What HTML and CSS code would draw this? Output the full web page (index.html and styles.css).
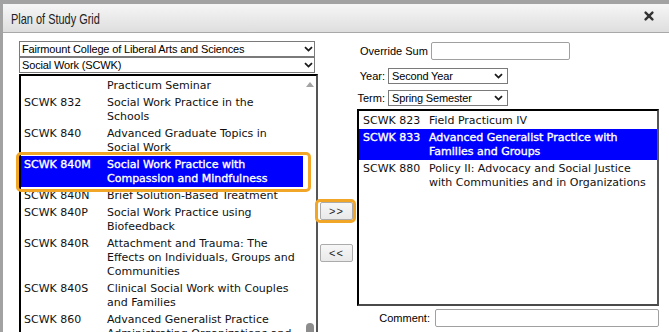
FILE: index.html
```html
<!DOCTYPE html>
<html>
<head>
<meta charset="utf-8">
<link rel="stylesheet" href="styles.css">
</head>
<body>
<div class="dialog">
  <div class="titlebar">
    <span class="title">Plan of Study Grid</span>
    <svg class="close" width="10" height="10" viewBox="0 0 10 10"><path d="M1.6 1.6 L8.4 8.4 M8.4 1.6 L1.6 8.4" stroke="#333" stroke-width="2.4" stroke-linecap="round"/></svg>
  </div>
  <div class="content">
    <div class="left">
      <div class="select wide"><span>Fairmount College of Liberal Arts and Sciences</span><svg class="chev" width="9" height="6" viewBox="0 0 9 6"><path d="M1 1.2 L4.5 4.6 L8 1.2" fill="none" stroke="#1a1a1a" stroke-width="1.8"/></svg></div>
      <div class="select wide"><span>Social Work (SCWK)</span><svg class="chev" width="9" height="6" viewBox="0 0 9 6"><path d="M1 1.2 L4.5 4.6 L8 1.2" fill="none" stroke="#1a1a1a" stroke-width="1.8"/></svg></div>
      <div class="listbox left-list">
        <div class="items">
          <div class="item"><span class="code"></span><span class="name">Practicum Seminar</span></div>
          <div class="item"><span class="code">SCWK 832</span><span class="name">Social Work Practice in the Schools</span></div>
          <div class="item"><span class="code">SCWK 840</span><span class="name">Advanced Graduate Topics in Social Work</span></div>
          <div class="item selected focused"><span class="code">SCWK 840M</span><span class="name">Social Work Practice with Compassion and Mindfulness</span></div>
          <div class="item"><span class="code">SCWK 840N</span><span class="name">Brief Solution-Based Treatment</span></div>
          <div class="item"><span class="code">SCWK 840P</span><span class="name">Social Work Practice using Biofeedback</span></div>
          <div class="item"><span class="code">SCWK 840R</span><span class="name">Attachment and Trauma: The Effects on Individuals, Groups and Communities</span></div>
          <div class="item"><span class="code">SCWK 840S</span><span class="name">Clinical Social Work with Couples and Families</span></div>
          <div class="item"><span class="code">SCWK 860</span><span class="name">Advanced Generalist Practice Administrating Organizations and Communities</span></div>
        </div>
        <div class="scrollbar"><div class="arrow-up"></div><div class="thumb"></div></div>
      </div>
    </div>
    <div class="mid">
      <button class="btn add focused-btn">&gt;&gt;</button>
      <button class="btn remove">&lt;&lt;</button>
    </div>
    <div class="right">
      <div class="row override">
        <span class="lbl">Override Sum</span>
        <span class="input sum"></span>
      </div>
      <div class="row pick year">
        <span class="plabel">Year:</span>
        <div class="select small"><span>Second Year</span><svg class="chev" width="9" height="6" viewBox="0 0 9 6"><path d="M1 1.2 L4.5 4.6 L8 1.2" fill="none" stroke="#1a1a1a" stroke-width="1.8"/></svg></div>
      </div>
      <div class="row pick term">
        <span class="plabel">Term:</span>
        <div class="select small"><span>Spring Semester</span><svg class="chev" width="9" height="6" viewBox="0 0 9 6"><path d="M1 1.2 L4.5 4.6 L8 1.2" fill="none" stroke="#1a1a1a" stroke-width="1.8"/></svg></div>
      </div>
      <div class="listbox right-list">
        <div class="items">
          <div class="item"><span class="code">SCWK 823</span><span class="name">Field Practicum IV</span></div>
          <div class="item selected"><span class="code">SCWK 833</span><span class="name">Advanced Generalist Practice with Families and Groups</span></div>
          <div class="item"><span class="code">SCWK 880</span><span class="name">Policy II: Advocacy and Social Justice with Communities and in Organizations</span></div>
        </div>
      </div>
      <div class="row comment">
        <span class="lbl">Comment:</span>
        <span class="input cmt"></span>
      </div>
    </div>
  </div>
</div>
</body>
</html>
```
FILE: styles.css
```css
* { box-sizing: border-box; }
html, body { margin: 0; padding: 0; }
body {
  width: 669px;
  height: 332px;
  overflow: hidden;
  background: #a2a2a2;
  font-family: "Liberation Sans", Arial, sans-serif;
  color: #000;
}
.dialog {
  margin: 4px 0 0 3px;
  width: 666px;
  height: 328px;
  background: #fff;
}
.titlebar {
  height: 29px;
  display: flex;
  align-items: center;
  justify-content: space-between;
  padding: 0 15px 0 8px;
  background: linear-gradient(#f6f6f6, #dedede);
  border-bottom: 1px solid #a8a8a8;
}
.title {
  font-family: "Liberation Sans", Arial, sans-serif;
  font-size: 15px;
  color: #222;
  display: inline-block;
  transform: scaleX(0.73);
  transform-origin: left center;
}
.close { margin-bottom: 5px; }
.content {
  display: flex;
  align-items: flex-start;
  padding: 8px 0 0 16px;
}
.left { width: 299px; }
.select {
  display: flex;
  align-items: center;
  justify-content: space-between;
  height: 16px;
  border: 1px solid #7a7a7a;
  background: #fff;
  font-size: 11px;
  letter-spacing: -0.15px;
  white-space: nowrap;
}
.select.wide { width: 296px; padding: 0 1px 0 2px; }
.select.small { width: 120px; padding: 0 4px 0 3px; }
.listbox {
  display: flex;
  border-style: solid;
  border-width: 2px;
  border-color: #000 #555 #4a4a4a #000;
  background: #fff;
  font-family: "DejaVu Sans", Verdana, sans-serif;
  font-size: 11px;
  line-height: 14px;
}
.left-list {
  margin-top: 1px;
  width: 299px;
  height: 300px;
}
.items { padding-top: 1px; }
.left-list .items { width: 282px; }
.item {
  display: flex;
  padding: 2px 0 1px 3px;
  color: #111;
  position: relative;
}
.left-list .code { width: 83px; flex: none; }
.left-list .name { width: 190px; }
.item.selected {
  background: #0000ff;
  color: #fff;
  -webkit-text-stroke: 0.35px #fff;
}
.item.focused::after {
  content: "";
  position: absolute;
  top: -4px;
  bottom: -5px;
  left: -5px;
  right: -8px;
  border: 3px solid #f2a628;
  border-radius: 5px;
  z-index: 2;
}
.scrollbar {
  width: 13px;
  display: flex;
  flex-direction: column;
}
.arrow-up {
  margin: 6px 0 0 3px;
  width: 0;
  height: 0;
  border-left: 4.5px solid transparent;
  border-right: 4.5px solid transparent;
  border-bottom: 5px solid #a3a3a3;
}
.thumb {
  margin: 236px 0 0 3px;
  width: 8px;
  height: 30px;
  border-radius: 4px;
  background: #8d8d8d;
}
.mid {
  width: 39px;
  padding-left: 2px;
  display: flex;
  flex-direction: column;
}
.btn {
  width: 33px;
  height: 18px;
  padding: 0;
  font-family: "Liberation Sans", Arial, sans-serif;
  font-size: 11px;
  letter-spacing: 1px;
  color: #222;
  background: linear-gradient(#f7f7f7, #e9e9e9);
  border: 1px solid #ababab;
  border-radius: 2px;
  position: relative;
}
.btn.add { margin-top: 161px; }
.btn.remove { margin-top: 24px; }
.focused-btn::after {
  content: "";
  position: absolute;
  top: -4px;
  bottom: -4px;
  left: -6px;
  right: -4px;
  border: 3px solid #f2a628;
  border-radius: 5px;
}
.right {
  width: 302px;
  display: flex;
  flex-direction: column;
}
.row {
  display: flex;
  align-items: center;
  font-size: 11px;
}
.override { margin-top: 1px; padding-left: 3px; }
.input {
  display: block;
  height: 18px;
  border: 1px solid #a0a0a0;
  border-radius: 2px;
  background: #fff;
}
.sum { width: 139px; margin-left: 3px; }
.plabel {
  width: 31px;
  padding-right: 3px;
  text-align: right;
}
.year { margin-top: 8px; }
.term { margin-top: 6px; }
.right-list {
  margin-top: 3px;
  width: 302px;
  height: 197px;
}
.right-list .items { width: 100%; }
.right-list .item { padding-left: 4px; }
.right-list .code { width: 66px; flex: none; }
.right-list .name { width: 222px; }
.comment {
  margin-top: 3px;
  justify-content: flex-end;
}
.comment .lbl { margin-right: 5px; }
.cmt { width: 224px; }
```
